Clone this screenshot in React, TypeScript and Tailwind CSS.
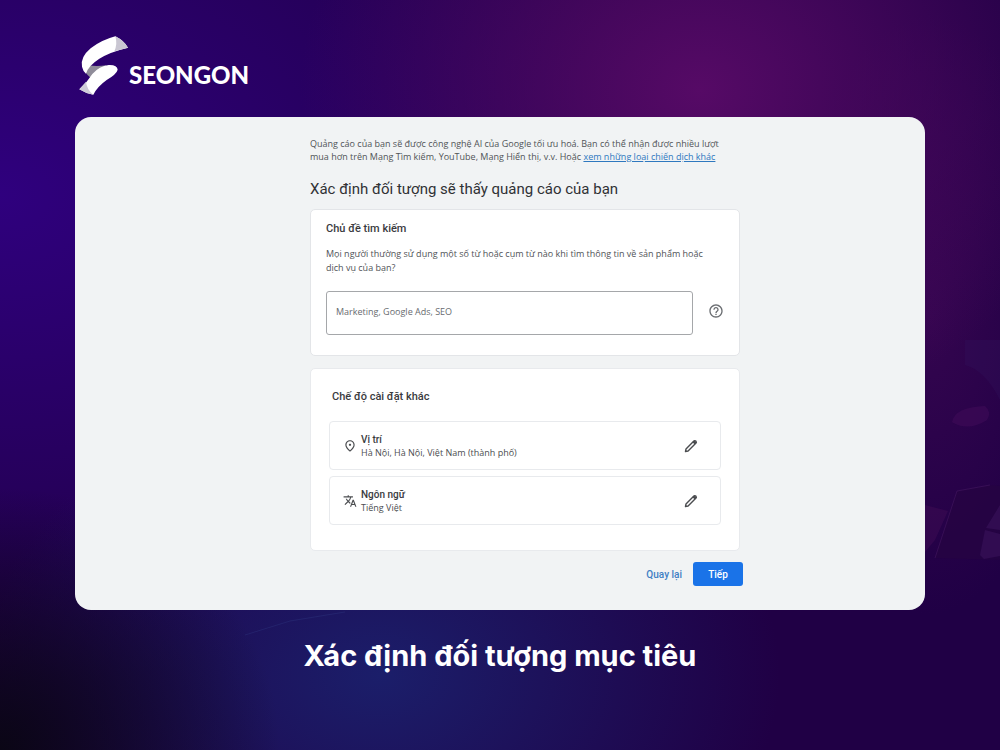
import React from 'react';
import { MdHelpOutline, MdOutlinePlace, MdTranslate } from 'react-icons/md';

interface SettingRowProps {
  icon: React.ReactNode;
  label: string;
  value: string;
}

const Logo: React.FC = () => (
  <a href="#" aria-label="SEONGON" className="flex items-start text-white">
    <svg viewBox="15 18 150 180" className="h-[60px] w-[50px]" aria-hidden="true">
      <path d="M44 106 Q66 110 98 106 L54 144 Q40 138 32 122Z" fill="#8f8c99" />
      <path
        d="M124 19 Q82 30 50 55 Q18 82 24 110 Q27 124 36 131 Q42 108 76 86 Q108 66 162 53 Q150 32 124 19Z"
        fill="#fff"
      />
      <path d="M124 19 Q150 32 162 53 L121 64 Q131 42 124 19Z" fill="#c9c6d2" />
      <path
        d="M58 194 Q70 170 98 150 Q128 132 131 119 Q130 104 104 105 Q76 108 55 132 Q40 156 16 178 Q34 190 58 194Z"
        fill="#fff"
      />
      <path d="M36 155 L16 178 Q34 190 58 194 Q38 178 36 155Z" fill="#cfccd8" />
    </svg>
    <span className="mt-6 font-['Lato',sans-serif] text-2xl leading-[30px] font-black">SEONGON</span>
  </a>
);

// Faint office scene behind the slide
const Backdrop: React.FC = () => (
  <svg
    viewBox="0 0 1000 750"
    preserveAspectRatio="none"
    className="absolute inset-0 h-full w-full"
    aria-hidden="true"
  >
    <path d="M965 340 L1000 340 L1000 400 Q985 370 965 365Z" fill="#33145c" opacity="0.3" />
    <path d="M952 422 Q955 407 985 406 Q992 412 987 420 Q968 432 952 422Z" fill="#4c1060" opacity="0.35" />
    <path d="M925 505 L948 511 L935 540 L925 552Z" fill="#451058" opacity="0.4" />
    <path d="M935 558 L957 491 L990 485 L1000 486 L1000 560Z" fill="#270541" opacity="0.6" />
    <path d="M935 558 L957 491 L990 485" fill="none" stroke="#4a1c66" opacity="0.5" />
    <path d="M1000 505 L986 528 L1000 530 M980 555 L985 530 L1000 534 L1000 556 L984 559Z" fill="#3d1660" opacity="0.5" />
    <path d="M245 635 L290 621 L345 612" fill="none" stroke="#34428c" opacity="0.3" />
  </svg>
);

const PencilIcon: React.FC = () => (
  <svg viewBox="0 0 14 14" className="h-[14px] w-[14px]" aria-hidden="true">
    <path
      d="M1.5 12.5 L2 9.9 L9.9 2 Q10.9 1.2 11.9 2.1 Q12.8 3.1 12 4.1 L4.1 12 Z"
      fill="none"
      stroke="#4b4d50"
      strokeWidth="1.4"
      strokeLinejoin="round"
    />
    <path d="M8.4 3.2 L10.4 1.2 L12.8 3.6 L10.8 5.6Z" fill="#4b4d50" />
  </svg>
);

const SettingRow: React.FC<SettingRowProps> = ({ icon, label, value }) => (
  <div className="flex h-[49px] items-center gap-1 rounded-[4px] border border-[#e8eaed] pr-[22px] pl-[13px] text-[#4b4d50]">
    {icon}
    <div className="flex-1 leading-[13px]">
      <h3 className="text-[10px] font-medium text-[#3a3b3e]">{label}</h3>
      <p className="font-['Open_Sans',sans-serif] text-[9px]">{value}</p>
    </div>
    <button type="button" aria-label={`Chỉnh sửa ${label}`}>
      <PencilIcon />
    </button>
  </div>
);

export const App: React.FC = () => {
  return (
    <div className="relative min-h-screen bg-[#200045] bg-[radial-gradient(ellipse_40%_45%_at_70%_12%,#560a66_0%,#560a6600_100%),radial-gradient(ellipse_14%_40%_at_93%_42%,#34054f_0%,#34054f00_100%),radial-gradient(ellipse_28%_35%_at_0%_100%,#0a0615_0%,#0a061500_100%),radial-gradient(ellipse_40%_38%_at_38%_90%,#1b1e6a_0%,#1b1e6a00_100%),radial-gradient(ellipse_70%_65%_at_0%_26%,#2f007e_0%,#2f007e00_100%)]">
      <Backdrop />
      <div className="relative px-[75px] pt-9 pb-10">
        <header className="flex pl-1">
          <Logo />
        </header>

        <main className="mt-[21px] flex justify-center rounded-2xl bg-[#f1f3f4] pt-5 pb-6 pl-[53px] font-['Roboto',sans-serif]">
          <form className="w-full max-w-[433px]" onSubmit={(e) => e.preventDefault()}>
            <p className="font-['Open_Sans',sans-serif] text-[9px] leading-[13px] text-[#505357]">
              Quảng cáo của bạn sẽ được công nghệ AI của Google tối ưu hoá. Bạn có thể nhận được nhiều lượt
              <br />
              mua hơn trên Mạng Tìm kiếm, YouTube, Mạng Hiển thị, v.v. Hoặc{' '}
              <a href="#" className="text-[#2f78bf] underline">xem những loại chiến dịch khác</a>
            </p>
            <h1 className="mt-[14px] text-[15px] leading-6 text-[#303134]">
              Xác định đối tượng sẽ thấy quảng cáo của bạn
            </h1>

            <section className="mt-2 mr-[3px] rounded-[5px] border border-[#e3e5e8] bg-white px-[15px] pt-[11px] pb-5">
              <h2 className="text-[11px] leading-4 font-medium text-[#3a3b3e]">Chủ đề tìm kiếm</h2>
              <label
                htmlFor="topics"
                className="mt-[10px] block font-['Open_Sans',sans-serif] text-[9px] leading-[14px] text-[#505357]"
              >
                Mọi người thường sử dụng một số từ hoặc cụm từ nào khi tìm thông tin về sản phẩm hoặc
                <br />
                dịch vụ của bạn?
              </label>
              <div className="mt-4 flex items-center gap-[15px]">
                <input
                  id="topics"
                  type="text"
                  defaultValue="Marketing, Google Ads, SEO"
                  className="h-11 min-w-0 flex-1 rounded-[3px] border border-[#a5a7aa] px-[9px] pb-[3px] font-['Open_Sans',sans-serif] text-[9px] text-[#686b6f]"
                />
                <button type="button" aria-label="Trợ giúp" className="pb-1 text-[#6b6e72]">
                  <MdHelpOutline size={16} />
                </button>
              </div>
            </section>

            <section className="mt-3 mr-[3px] rounded-[5px] border border-[#e8eaed] bg-white px-[18px] pt-5 pb-[25px]">
              <h2 className="pl-[3px] text-[11px] leading-4 font-medium text-[#3a3b3e]">Chế độ cài đặt khác</h2>
              <div className="mt-4 flex flex-col gap-[6px]">
                <SettingRow
                  icon={<MdOutlinePlace size={14} />}
                  label="Vị trí"
                  value="Hà Nội, Hà Nội, Việt Nam (thành phố)"
                />
                <SettingRow icon={<MdTranslate size={14} />} label="Ngôn ngữ" value="Tiếng Việt" />
              </div>
            </section>

            <div className="mt-[11px] flex items-center justify-end gap-[11px] text-[10px] font-medium">
              <button type="button" className="text-[#3f7fc4]">Quay lại</button>
              <button type="submit" className="h-6 w-[50px] rounded-[3px] bg-[#1a73e8] text-white">Tiếp</button>
            </div>
          </form>
        </main>

        <p className="mt-7 text-center font-['Inter',sans-serif] text-[29px] leading-9 font-bold text-white">
          Xác định đối tượng mục tiêu
        </p>
      </div>
    </div>
  );
};

export default App;
